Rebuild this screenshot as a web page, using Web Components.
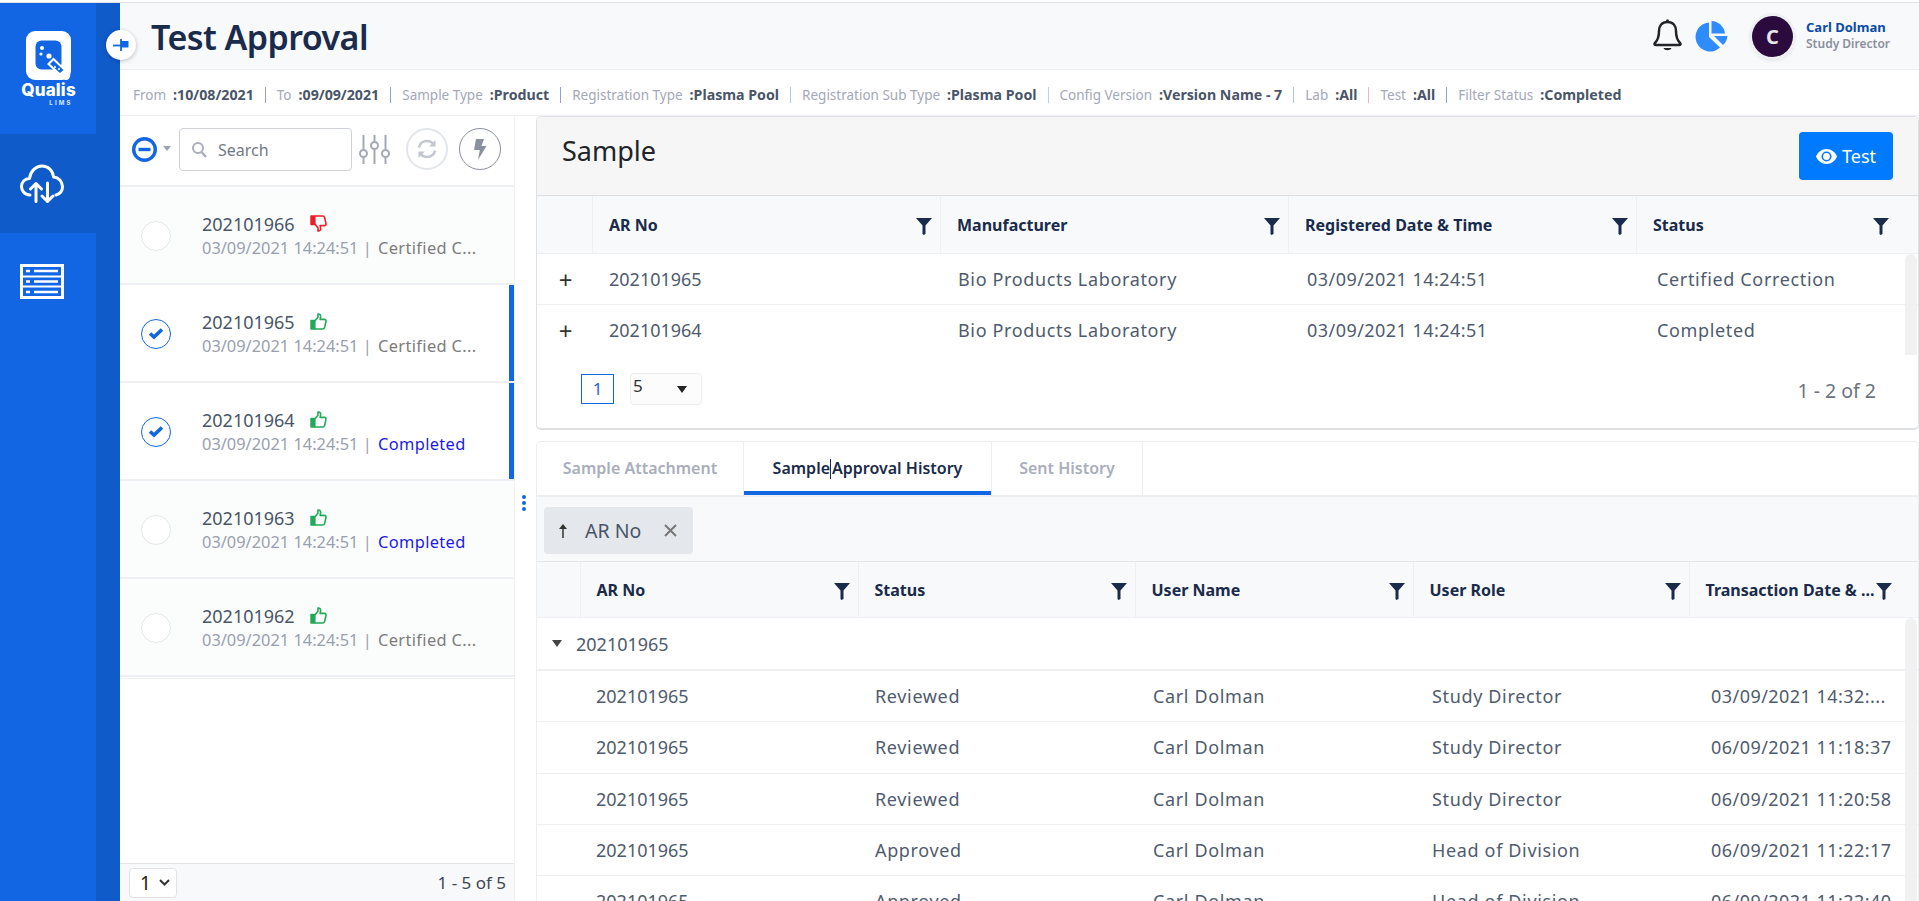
<!DOCTYPE html>
<html lang="en">
<head>
<meta charset="utf-8">
<title>Test Approval</title>
<style>
    html, body { margin: 0; height: 100%; overflow: hidden; background: #fff; }
    body { font-family: "Noto Sans", "Liberation Sans", sans-serif; color: #4a5568; }
</style>
</head>
<body>
<q-app>
    <q-sidebar slot="side"></q-sidebar>
    <q-header slot="head" title="Test Approval" user="Carl Dolman" role="Study Director"></q-header>
    <q-filter-bar slot="filters">
        <q-filter label="From" value="10/08/2021" line="#8fa3d8"></q-filter>
        <q-filter label="To" value="09/09/2021" line="#8fa3d8"></q-filter>
        <q-filter label="Sample Type" value="Product" line="#8fa3d8"></q-filter>
        <q-filter label="Registration Type" value="Plasma Pool" line="#b9c6e8"></q-filter>
        <q-filter label="Registration Sub Type" value="Plasma Pool" line="#b9d0f0"></q-filter>
        <q-filter label="Config Version" value="Version Name - 7" line="#a9c6ee"></q-filter>
        <q-filter label="Lab" value="All" line="#eab4c4"></q-filter>
        <q-filter label="Test" value="All" line="#8fa3d8"></q-filter>
        <q-filter label="Filter Status" value="Completed"></q-filter>
    </q-filter-bar>
    <q-sample-list slot="list">
        <q-sample-item no="202101966" thumb="down" status="Certified C..."></q-sample-item>
        <q-sample-item no="202101965" thumb="up" status="Certified C..." checked></q-sample-item>
        <q-sample-item no="202101964" thumb="up" status="Completed" done checked></q-sample-item>
        <q-sample-item no="202101963" thumb="up" status="Completed" done></q-sample-item>
        <q-sample-item no="202101962" thumb="up" status="Certified C..."></q-sample-item>
    </q-sample-list>
    <q-sample-card slot="top">
        <q-grid style="--head-cols:56px 348px 348px 348px 260px; --row-cols:56px 349px 349px 350px 1fr; --head-h:58px; --row-h:51px; --head-pad:16px; --row-pad:16px; --bar-top:58px">
            <q-grid-row head>
                <q-cell></q-cell><q-cell head>AR No</q-cell><q-cell head>Manufacturer</q-cell><q-cell head>Registered Date &amp; Time</q-cell><q-cell head>Status</q-cell>
            </q-grid-row>
            <q-grid-row>
                <q-cell plus>+</q-cell><q-cell>202101965</q-cell><q-cell>Bio Products Laboratory</q-cell><q-cell>03/09/2021 14:24:51</q-cell><q-cell>Certified Correction</q-cell>
            </q-grid-row>
            <q-grid-row last>
                <q-cell plus>+</q-cell><q-cell>202101964</q-cell><q-cell>Bio Products Laboratory</q-cell><q-cell>03/09/2021 14:24:51</q-cell><q-cell>Completed</q-cell>
            </q-grid-row>
        </q-grid>
    </q-sample-card>
    <q-history-card slot="bottom">
        <q-grid style="--head-cols:44px 278px 277px 278px 276px 210px; --row-cols:44px 279px 278px 279px 279px 1fr; --head-h:56px; --row-h:51.3px; --head-pad:15.5px; --row-pad:15px; --bar-top:56px">
            <q-grid-row head>
                <q-cell></q-cell><q-cell head>AR No</q-cell><q-cell head>Status</q-cell><q-cell head>User Name</q-cell><q-cell head>User Role</q-cell><q-cell head>Transaction Date &amp; ...</q-cell>
            </q-grid-row>
            <q-group-row>202101965</q-group-row>
            <q-grid-row><q-cell></q-cell><q-cell>202101965</q-cell><q-cell>Reviewed</q-cell><q-cell>Carl Dolman</q-cell><q-cell>Study Director</q-cell><q-cell>03/09/2021 14:32:...</q-cell></q-grid-row>
            <q-grid-row><q-cell></q-cell><q-cell>202101965</q-cell><q-cell>Reviewed</q-cell><q-cell>Carl Dolman</q-cell><q-cell>Study Director</q-cell><q-cell>06/09/2021 11:18:37</q-cell></q-grid-row>
            <q-grid-row><q-cell></q-cell><q-cell>202101965</q-cell><q-cell>Reviewed</q-cell><q-cell>Carl Dolman</q-cell><q-cell>Study Director</q-cell><q-cell>06/09/2021 11:20:58</q-cell></q-grid-row>
            <q-grid-row><q-cell></q-cell><q-cell>202101965</q-cell><q-cell>Approved</q-cell><q-cell>Carl Dolman</q-cell><q-cell>Head of Division</q-cell><q-cell>06/09/2021 11:22:17</q-cell></q-grid-row>
            <q-grid-row><q-cell></q-cell><q-cell>202101965</q-cell><q-cell>Approved</q-cell><q-cell>Carl Dolman</q-cell><q-cell>Head of Division</q-cell><q-cell>06/09/2021 11:22:40</q-cell></q-grid-row>
        </q-grid>
    </q-history-card>
</q-app>

<script>
/**
 * Small helper so every element below opens its shadow root the same way
 * @extends {HTMLElement}
 */
class ShadowElement extends HTMLElement {
    /**
     * @param {string} html
     * @returns {void}
     */
    render(html) {
        if (!this.shadowRoot) {
            this.attachShadow({ mode: 'open' });
        }
        this.shadowRoot.innerHTML = html;
    }
}

/** Page frame: sidebar, header, filters, list and the two cards */
class QApp extends ShadowElement {
    connectedCallback() {
        this.render(`
            <style>
                :host { display: grid; grid-template-columns: 120px 1fr; height: 901px; padding-top: 2px; box-sizing: border-box; position: relative; }
                .main { display: flex; flex-direction: column; min-width: 0; height: 899px; border-top: 1px solid #dfe2e7; box-sizing: border-box; }
                .side { border-top: 1px solid #dfe2e7; display: flex; min-height: 0; }
                .body { flex: 1; display: grid; grid-template-columns: 395px 21px 1fr; min-height: 0; }
                .split { display: flex; align-items: center; justify-content: flex-start; padding: 0 0 0 7px; position: relative; }
                .dots { display: flex; flex-direction: column; gap: 2px; margin-top: -12px; }
                .dots i { width: 4px; height: 4px; border-radius: 50%; background: #1266e3; }
                .cards { display: flex; flex-direction: column; gap: 11px; min-width: 0; min-height: 0; }
            </style>
            <div class="side"><slot name="side"></slot></div>
            <div class="main">
                <slot name="head"></slot>
                <slot name="filters"></slot>
                <div class="body">
                    <slot name="list"></slot>
                    <div class="split"><div class="dots"><i></i><i></i><i></i></div></div>
                    <div class="cards">
                        <slot name="top"></slot>
                        <slot name="bottom"></slot>
                    </div>
                </div>
            </div>
        `);
    }
}

/** Left navigation rail */
class QSidebar extends ShadowElement {
    connectedCallback() {
        this.render(`
            <style>
                :host { display: flex; flex-direction: column; width: 120px; background: #0f5bc9; flex: none; }
                .item { width: 96px; background: #1266e3; display: flex; justify-content: center; flex: none; box-sizing: border-box; }
                .logo { height: 131px; flex-direction: column; justify-content: flex-start; align-items: center; padding-top: 28px; }
                .logo svg { display: block; margin-left: 2px; flex: none; }
                .name { font: 800 17px/17px Inter, "Noto Sans", sans-serif; color: #fff; letter-spacing: .2px; margin: 1px 0 0 1px; }
                .lims { font: 700 6px/7px Inter, sans-serif; color: #dfeaff; letter-spacing: 2.2px; margin: 0 0 0 26px; }
                .active { width: 120px; height: 99px; background: #0f5bc9; padding: 30px 36px 0 0; align-items: flex-start; }
                .rest { flex: 1; padding: 31px 12px 0 0; align-items: flex-start; }
            </style>
            <div class="item logo">
                <svg width="46" height="50" viewBox="0 0 46 50">
                    <rect x="0" y="0" width="45" height="49" rx="9" fill="#fff"/>
                    <rect x="9.5" y="9.5" width="26" height="29" rx="6" fill="#1266e3"/>
                    <circle cx="16" cy="17" r="2" fill="#fff"/><circle cx="15" cy="23" r="1.6" fill="#fff"/><circle cx="23" cy="25" r="2.6" fill="#fff"/>
                    <path d="M27.5 26.5 L44 43 q1 4-3 6 q-3 .5-5-2 L21 33 Z" fill="#fff"/>
                    <path d="M27.5 29.5 L24 33 L34 42 L37.5 39 Z" fill="#1266e3"/>
                    <circle cx="29" cy="36" r="1" fill="#fff"/><circle cx="33" cy="38" r="1" fill="#fff"/>
                </svg>
                <div class="name">Qualis</div>
                <div class="lims">LIMS</div>
            </div>
            <div class="item active">
                <svg width="44" height="40" viewBox="0 0 44 40" fill="none" stroke="#fff" stroke-width="3" stroke-linecap="round" stroke-linejoin="round">
                    <path d="M10 31 C4 31 1.5 26 1.5 22.5 C1.5 18 5 14.5 9.500 14.500 C10.500 7 16 2 22 2 C28.500 2 33 7 33.500 13 C38.500 13.500 42.500 17.500 42.500 22.500 C42.500 27 39.500 30 36 31"/>
                    <path d="M16 37.500 V20 M10.500 25 L16 19.500 L21.500 25"/>
                    <path d="M27.500 19 V37.500 M22 32 L27.500 37.500 L33 32"/>
                </svg>
            </div>
            <div class="item rest">
                <svg width="44" height="35" viewBox="0 0 44 35" fill="none" stroke="#fff">
                    <rect x="1.500" y="1.500" width="41" height="32" stroke-width="3"/>
                    <path d="M3 12.500 H41 M3 22.500 H41" stroke-width="2"/>
                    <path d="M14 7 H38 M14 17.500 H38 M14 28 H38" stroke-width="2.500"/>
                    <path d="M6 7 H10 M6 17.500 H10 M6 28 H10" stroke-width="2.500"/>
                </svg>
            </div>
        `);
    }
}

/** Title bar with pin button, notification icons and the user */
class QHeader extends ShadowElement {
    connectedCallback() {
        const name = this.getAttribute('user');
        this.render(`
            <style>
                :host { display: flex; align-items: center; height: 67px; flex: none; background: #f8f9fb; border-bottom: 1px solid #eceef2; box-sizing: border-box; padding: 0 15px 0 31px; position: relative; }
                .pin { position: absolute; left: -14px; top: 27px; width: 30px; height: 30px; border-radius: 50%; background: #fff; box-shadow: 0 1px 4px rgba(0,0,0,.25); display: flex; align-items: center; justify-content: center; }
                h1 { margin: 2px 0 0; font: 600 34px/40px "Noto Sans", sans-serif; color: #1a2b4b; flex: 1; letter-spacing: -.55px; }
                .bell { margin: -4px 13px 0 0; display: block; }
                .pie { margin-right: 24px; display: block; }
                .avatar { width: 41px; height: 41px; border-radius: 50%; background: #2b0a3d; color: #e8e4ec; font: 700 20px/41px "Noto Sans", sans-serif; text-align: center; box-shadow: 0 0 0 3px #eef0f3, 0 2px 5px rgba(0,0,0,.2); margin-right: 13px; flex: none; }
                .who { display: flex; flex-direction: column; width: 98px; margin-top: -2px; }
                .name { font: 700 13px/17px "Noto Sans", sans-serif; color: #0b4aa8; }
                .role { font: 600 12px/16px "Noto Sans", sans-serif; color: #8a8f9c; }
            </style>
            <div class="pin">
                <svg width="16" height="12" viewBox="0 0 16 12"><path d="M0 6.500 H8" stroke="#1266e3" stroke-width="1.800"/><path d="M8 0 V12" stroke="#1266e3" stroke-width="1.800"/><path d="M8 2 H15.500 V8.500 H8 Z" fill="#1266e3"/></svg>
            </div>
            <h1>${this.getAttribute('title')}</h1>
            <svg class="bell" width="29" height="33" viewBox="0 0 29 33" fill="none" stroke="#212529" stroke-width="2.500" stroke-linejoin="round">
                <path d="M14.500 4 C8.500 4 6 8.500 6 13 C6 20 4.500 22.500 2 25 C1 26 1.500 27 3 27 H26 C27.500 27 28 26 27 25 C24.500 22.500 23 20 23 13 C23 8.500 20.500 4 14.500 4 Z"/>
                <circle cx="14.500" cy="2.700" r="1.500" fill="#212529" stroke="none"/>
                <path d="M10.500 30 H18.500 C17.500 33 11.500 33 10.500 30 Z" fill="#212529" stroke="none"/>
            </svg>
            <svg class="pie" width="33" height="31" viewBox="0 0 33 31" fill="#2f8cff">
                <path d="M14 1.500 A14.500 14.500 0 1 0 25 26.500 L14 16 Z"/>
                <path d="M16.500 0 A14 14 0 0 1 30 12.500 H16.500 Z"/>
                <path d="M19 15 H32.500 A14 14 0 0 1 28 24 Z"/>
            </svg>
            <div class="avatar">C</div>
            <div class="who"><span class="name">${name}</span><span class="role">${this.getAttribute('role')}</span></div>
        `);
    }
}

/** Row of applied filters under the title */
class QFilterBar extends ShadowElement {
    connectedCallback() {
        this.render(`
            <style>
                :host { display: flex; align-items: center; height: 46px; flex: none; padding: 4px 0 0 13px; box-sizing: border-box; border-bottom: 1px solid #eef0f4; background: #fff; }
            </style>
            <slot></slot>
        `);
    }
}

/** One "label :value" pair with an optional divider */
class QFilter extends ShadowElement {
    connectedCallback() {
        const line = this.getAttribute('line');
        this.render(`
            <style>
                :host { display: flex; align-items: center; font-size: 13.500px; line-height: 16px; white-space: nowrap; }
                .l { color: #a4a8b6; }
                .v { color: #4a5568; font-weight: 700; font-size: 14.200px; margin-left: 7px; }
                i { width: 1px; height: 16px; margin: 0 11px; }
            </style>
            <span class="l">${this.getAttribute('label')}</span><span class="v">:${this.getAttribute('value')}</span>
            ${line ? `<i style="background:${line}"></i>` : ''}
        `);
    }
}

/** Left column: toolbar, items and pager */
class QSampleList extends ShadowElement {
    connectedCallback() {
        this.render(`
            <style>
                :host { display: flex; flex-direction: column; width: 395px; border-right: 1px solid #eef0f4; box-sizing: border-box; min-height: 0; background: #fff; }
                .tools { height: 71px; flex: none; border-bottom: 2px solid #eef0f4; box-sizing: border-box; display: flex; align-items: center; padding: 0 0 3px 12px; }
                .caret { width: 0; height: 0; border: 4px solid transparent; border-top: 5px solid #9aa3b2; border-bottom: 0; margin: -2px 8px 0 6px; }
                .search { width: 173px; height: 43px; border: 1px solid #cfd2d8; border-radius: 4px; box-sizing: border-box; display: flex; align-items: center; padding: 1px 0 0 12px; font-size: 16px; color: #737a86; gap: 11px; }
                .sliders { margin: 0 0 0 7px; display: block; }
                .round { width: 42px; height: 42px; border-radius: 50%; box-sizing: border-box; display: flex; align-items: center; justify-content: center; }
                .sync { border: 2px solid #e2e5ea; margin-left: 16px; }
                .bolt { border: 1px solid #8a909c; margin-left: 11px; }
                .items { flex: 1; min-height: 0; }
                .foot { height: 38px; flex: none; background: #f8f9fb; border-top: 1px solid #e3e5ea; box-sizing: border-box; display: flex; align-items: center; justify-content: space-between; padding: 0 8px 0 9px; font-size: 17px; color: #3f4654; }
                .sel { width: 48px; height: 30px; border: 1px solid #dfe2e7; border-radius: 4px; box-sizing: border-box; background: #fff; display: flex; align-items: center; justify-content: space-between; padding: 0 6px 0 10px; font-size: 19px; color: #222; }
            </style>
            <div class="tools">
                <svg width="25" height="25" viewBox="0 0 25 25"><circle cx="12.500" cy="12.500" r="10.800" fill="none" stroke="#1266e3" stroke-width="3.400"/><path d="M6.500 12.500 H18.500" stroke="#1266e3" stroke-width="3.400"/></svg>
                <span class="caret"></span>
                <div class="search">
                    <svg width="15" height="16" viewBox="0 0 15 16" fill="none" stroke="#a9aeb8" stroke-width="2"><circle cx="6" cy="6" r="5"/><path d="M9.500 10 L14 15" stroke-width="2.400"/></svg>
                    <span>Search</span>
                </div>
                <svg class="sliders" width="31" height="29" viewBox="0 0 31 29" fill="none" stroke="#a3a9b4" stroke-width="2">
                    <path d="M4.500 0 V14 M4.500 23 V29 M15.500 0 V6 M15.500 15 V29 M26.500 0 V14 M26.500 23 V29"/>
                    <circle cx="4.500" cy="18.500" r="3.500"/><circle cx="15.500" cy="10.500" r="3.500"/><circle cx="26.500" cy="18.500" r="3.500"/>
                </svg>
                <div class="round sync">
                    <svg width="20" height="20" viewBox="0 0 20 20" fill="none" stroke="#c3c8d0" stroke-width="2.600">
                        <path d="M2 8.500 C3 4 6.500 2 10 2 C13 2 15.500 3.500 17 6"/><path d="M18 11.500 C17 16 13.500 18 10 18 C7 18 4.500 16.500 3 14"/>
                        <path d="M18.500 1 V7.500 H12 Z M1.500 19 V12.500 H8 Z" fill="#c3c8d0" stroke="none"/>
                    </svg>
                </div>
                <div class="round bolt">
                    <svg width="14" height="21" viewBox="0 0 14 21" fill="#8a909c"><path d="M3 0 H11 L8.500 7 H13.500 L5 21 L6.800 11 H1 Z"/></svg>
                </div>
            </div>
            <div class="items"><slot></slot></div>
            <div class="foot">
                <div class="sel"><span>1</span><svg width="11" height="7" viewBox="0 0 11 7" fill="none" stroke="#333" stroke-width="2"><path d="M1 1 L5.500 5.500 L10 1"/></svg></div>
                <span>1 - 5 of 5</span>
            </div>
        `);
    }
}

/** One sample in the left list */
class QSampleItem extends ShadowElement {
    connectedCallback() {
        const checked = this.hasAttribute('checked');
        const down = this.getAttribute('thumb') === 'down';
        const colour = down ? '#ee1c25' : '#22a95a';
        const thumb = `
            <svg class="thumb" width="17" height="17" viewBox="0 0 16 16" fill="none" stroke="${colour}" stroke-width="1.500" stroke-linejoin="round" ${down ? 'style="transform:scaleY(-1)"' : ''}>
                <rect x="1" y="7" width="3.500" height="8" fill="${colour}"/>
                <path d="M4.500 7.500 L7.500 4 V1 C9 .7 10.200 1.800 10 3.500 L9.500 6 H13.500 C14.700 6 15.300 7 15 8 L13.800 13.500 C13.500 14.600 12.800 15 12 15 H4.500"/>
            </svg>`;
        this.render(`
            <style>
                :host { display: flex; align-items: center; height: 98px; box-sizing: border-box; border-bottom: 2px solid #eef0f5; background: ${checked ? '#fff' : '#fbfdfd'}; padding-left: 21px; position: relative; }
                :host(:last-child) { box-shadow: 0 1px 0 #fff, 0 2px 0 #eef0f5; }
                :host([checked])::after { content: ""; position: absolute; right: 0; top: 0; bottom: 0; width: 5px; background: #1266e3; }
                .check { width: 30px; height: 30px; border-radius: 50%; box-sizing: border-box; border: 1px solid ${checked ? '#1266e3' : '#e3e5e9'}; background: #fff; display: flex; align-items: center; justify-content: center; flex: none; margin: 1px 31px 0 0; }
                .no { display: flex; align-items: center; gap: 15px; font-size: 18px; line-height: 24px; color: #4a5568; }
                .meta { font-size: 16.400px; line-height: 23px; color: #9aa0ae; white-space: nowrap; }
                .st { color: ${this.hasAttribute('done') ? '#1a1aee' : '#7c7c7c'}; margin-left: 2px; letter-spacing: .35px; }
                .thumb { display: block; }
            </style>
            <div class="check">${checked ? '<svg width="16" height="13" viewBox="0 0 16 13"><path d="M2 6.500 L6 10 L14 2.500" fill="none" stroke="#1266e3" stroke-width="3.600"/></svg>' : ''}</div>
            <div>
                <div class="no"><span>${this.getAttribute('no')}</span>${thumb}</div>
                <div class="meta">03/09/2021 14:24:51 | <span class="st">${this.getAttribute('status')}</span></div>
            </div>
        `);
    }
}

/** Upper card: title, Test button, grid, pager */
class QSampleCard extends ShadowElement {
    connectedCallback() {
        this.render(`
            <style>
                :host { display: flex; flex-direction: column; height: 314px; flex: none; border: 1px solid #dee0e4; border-top-width: 1px; border-bottom-width: 2px; border-radius: 5px; box-sizing: border-box; background: #fff; overflow: hidden; position: relative; }
                .top { height: 79px; flex: none; background: #f6f6f6; border-bottom: 1px solid #dcdee2; box-sizing: border-box; display: flex; align-items: center; justify-content: space-between; padding: 0 25px 0 25px; }
                h2 { margin: 0 0 11px; font: 400 27px/32px "Noto Sans", sans-serif; color: #212529; }
                .btn { width: 94px; height: 48px; border-radius: 4px; background: #007bff; color: #fff; font-size: 18px; display: flex; align-items: center; justify-content: center; gap: 5px; }
                .pager { display: flex; align-items: center; height: 70px; padding: 0 42px 4px 44px; }
                .num { width: 33px; height: 30px; box-sizing: border-box; border: 1px solid #1266e3; color: #2a62e8; font-size: 17px; line-height: 28px; text-align: center; }
                .size { width: 72px; height: 32px; box-sizing: border-box; border: 1px solid #eceef1; border-radius: 4px; background: #fcfcfc; margin-left: 16px; color: #333; font-size: 17px; line-height: 24px; padding: 0 14px 0 2px; display: flex; justify-content: space-between; }
                .size i { width: 0; height: 0; border: 5px solid transparent; border-top: 7px solid #222; border-bottom: 0; margin-top: 12px; }
                .total { margin-left: auto; margin-top: 2px; font-size: 19.500px; color: #6c7480; }
            </style>
            <div class="top">
                <h2>Sample</h2>
                <div class="btn">
                    <svg width="21" height="15" viewBox="0 0 21 15"><path d="M10.500 0 C5.500 0 1.800 3.300 0 7.500 C1.800 11.700 5.500 15 10.500 15 C15.500 15 19.200 11.700 21 7.500 C19.200 3.300 15.500 0 10.500 0 Z" fill="#fff"/><circle cx="10.500" cy="7.500" r="5" fill="#007bff"/><circle cx="10.500" cy="7.500" r="3.400" fill="#fff"/></svg>
                    <span>Test</span>
                </div>
            </div>
            <slot></slot>
            <div class="pager">
                <div class="num">1</div>
                <div class="size"><span>5</span><i></i></div>
                <span class="total">1 - 2 of 2</span>
            </div>
        `);
    }
}

/** Lower card: tabs, group-by chip, grid */
class QHistoryCard extends ShadowElement {
    connectedCallback() {
        this.render(`
            <style>
                :host { display: flex; flex-direction: column; flex: 1; min-height: 0; border: 1px solid #eceef1; border-bottom: 0; border-radius: 5px 5px 0 0; box-sizing: border-box; background: #fff; overflow: hidden; }
                .tabs { display: flex; height: 55px; flex: none; border-bottom: 2px solid #eceef1; box-sizing: border-box; }
                .tab { height: 100%; box-sizing: border-box; border-right: 1px solid #eceef1; font-size: 16px; font-weight: 600; line-height: 52px; text-align: center; color: #a9aebb; position: relative; }
                .on { color: #1a2b4b; }
                .on::after { content: ""; position: absolute; left: 0; right: 0; bottom: 0; height: 4px; background: #1266e3; }
                .caret { display: inline-block; width: 1px; height: 20px; background: #1a2b4b; vertical-align: -5px; margin-right: 1px; }
                .group { height: 65px; flex: none; background: #f8f9fb; border-bottom: 1px solid #e3e5e9; box-sizing: border-box; padding: 10px 7px; }
                .chip { width: 149px; height: 47px; background: #e4e7eb; border-radius: 4px; display: flex; align-items: center; box-sizing: border-box; padding-left: 14px; font-size: 19.500px; color: #4a5568; }
                .chip svg { display: block; }
                .chip span { margin: 0 23px 0 17px; }
            </style>
            <div class="tabs">
                <div class="tab" style="width:207px">Sample Attachment</div>
                <div class="tab on" style="width:248px">Sample<span class="caret"></span>Approval History</div>
                <div class="tab" style="width:151px">Sent History</div>
            </div>
            <div class="group">
                <div class="chip">
                    <svg width="10" height="14" viewBox="0 0 10 14" fill="none" stroke="#333" stroke-width="1.500"><path d="M5 14 V2"/><path d="M5 0 L9 5 H1 Z" fill="#333" stroke="none"/></svg>
                    <span>AR No</span>
                    <svg width="13" height="13" viewBox="0 0 13 13" stroke="#777" stroke-width="2"><path d="M1 1 L12 12 M12 1 L1 12"/></svg>
                </div>
            </div>
            <slot></slot>
        `);
    }
}

/** Grid body; columns come in through custom properties on the host */
class QGrid extends ShadowElement {
    connectedCallback() {
        this.render(`
            <style>
                :host { display: block; position: relative; overflow: hidden; }
                .bar { position: absolute; right: 1px; top: var(--bar-top); width: 12px; height: 600px; background: #f1f1f1; border-radius: 6px; z-index: 2; }
            </style>
            <slot></slot>
            <div class="bar"></div>
        `);
    }
}

/** Grid row, laid out as a CSS grid over its slotted cells */
class QGridRow extends ShadowElement {
    connectedCallback() {
        const head = this.hasAttribute('head');
        const last = this.hasAttribute('last');
        this.render(`
            <style>
                :host { display: grid; grid-template-columns: ${head ? 'var(--head-cols)' : 'var(--row-cols)'}; height: ${head ? 'var(--head-h)' : 'var(--row-h)'}; box-sizing: border-box; border-bottom: 1px solid ${last ? '#fff' : '#eef0f4'}; background: ${head ? '#f8f9fb' : '#fff'}; }
            </style>
            <slot></slot>
        `);
    }
}

/** Single cell: plain text, header with filter funnel, or the expand plus */
class QCell extends ShadowElement {
    connectedCallback() {
        const head = this.hasAttribute('head');
        const plus = this.hasAttribute('plus');
        const inHead = this.parentElement.hasAttribute('head');
        const lastInHead = inHead && !this.nextElementSibling;
        const text = this.textContent;
        // numbers already have the reference width, words and dates run wider than Noto Sans
        const spacing = /^\d{9}$/.test(text) ? '0' : /^\d\d\//.test(text) ? '.45px' : '.65px';
        this.render(`
            <style>
                :host { display: flex; align-items: center; min-width: 0; white-space: nowrap; position: relative; box-sizing: border-box;
                    padding-left: ${plus ? '0' : head ? 'var(--head-pad)' : 'var(--row-pad)'};
                    ${inHead && !lastInHead ? 'border-right: 1px solid #eef0f4;' : ''}
                    ${plus ? 'justify-content: center; font-size: 24px; color: #333; padding-left: 1px;' : ''}
                    ${head ? 'font-size: 16px; font-weight: 700; color: #1a2b4b; padding-top: 1px;' : ''}
                    ${!head && !plus ? `font-size: 18px; color: #4f5b6e; letter-spacing: ${spacing};` : ''}
                }
                svg { position: absolute; right: 8px; top: 50%; margin-top: -7px; }
            </style>
            <slot></slot>
            ${head ? '<svg width="16" height="17" viewBox="0 0 16 17"><path d="M0 0 H16 L9.500 7.500 V16 L7.500 17 L6.500 16 V7.500 Z" fill="#1a2b4b"/></svg>' : ''}
        `);
    }
}

/** Group-by row above the history rows */
class QGroupRow extends ShadowElement {
    connectedCallback() {
        this.render(`
            <style>
                :host { display: flex; align-items: center; height: 53px; box-sizing: border-box; border-bottom: 2px solid #eef0f4; background: #fff; padding-left: 15px; font-size: 18px; color: #4f5b6e; }
                i { width: 0; height: 0; border: 5px solid transparent; border-top: 7px solid #444; border-bottom: 0; margin-right: 14px; }
            </style>
            <i></i><slot></slot>
        `);
    }
}

customElements.define('q-app', QApp);
customElements.define('q-sidebar', QSidebar);
customElements.define('q-header', QHeader);
customElements.define('q-filter-bar', QFilterBar);
customElements.define('q-filter', QFilter);
customElements.define('q-sample-list', QSampleList);
customElements.define('q-sample-item', QSampleItem);
customElements.define('q-sample-card', QSampleCard);
customElements.define('q-history-card', QHistoryCard);
customElements.define('q-grid', QGrid);
customElements.define('q-grid-row', QGridRow);
customElements.define('q-cell', QCell);
customElements.define('q-group-row', QGroupRow);
</script>
</body>
</html>
